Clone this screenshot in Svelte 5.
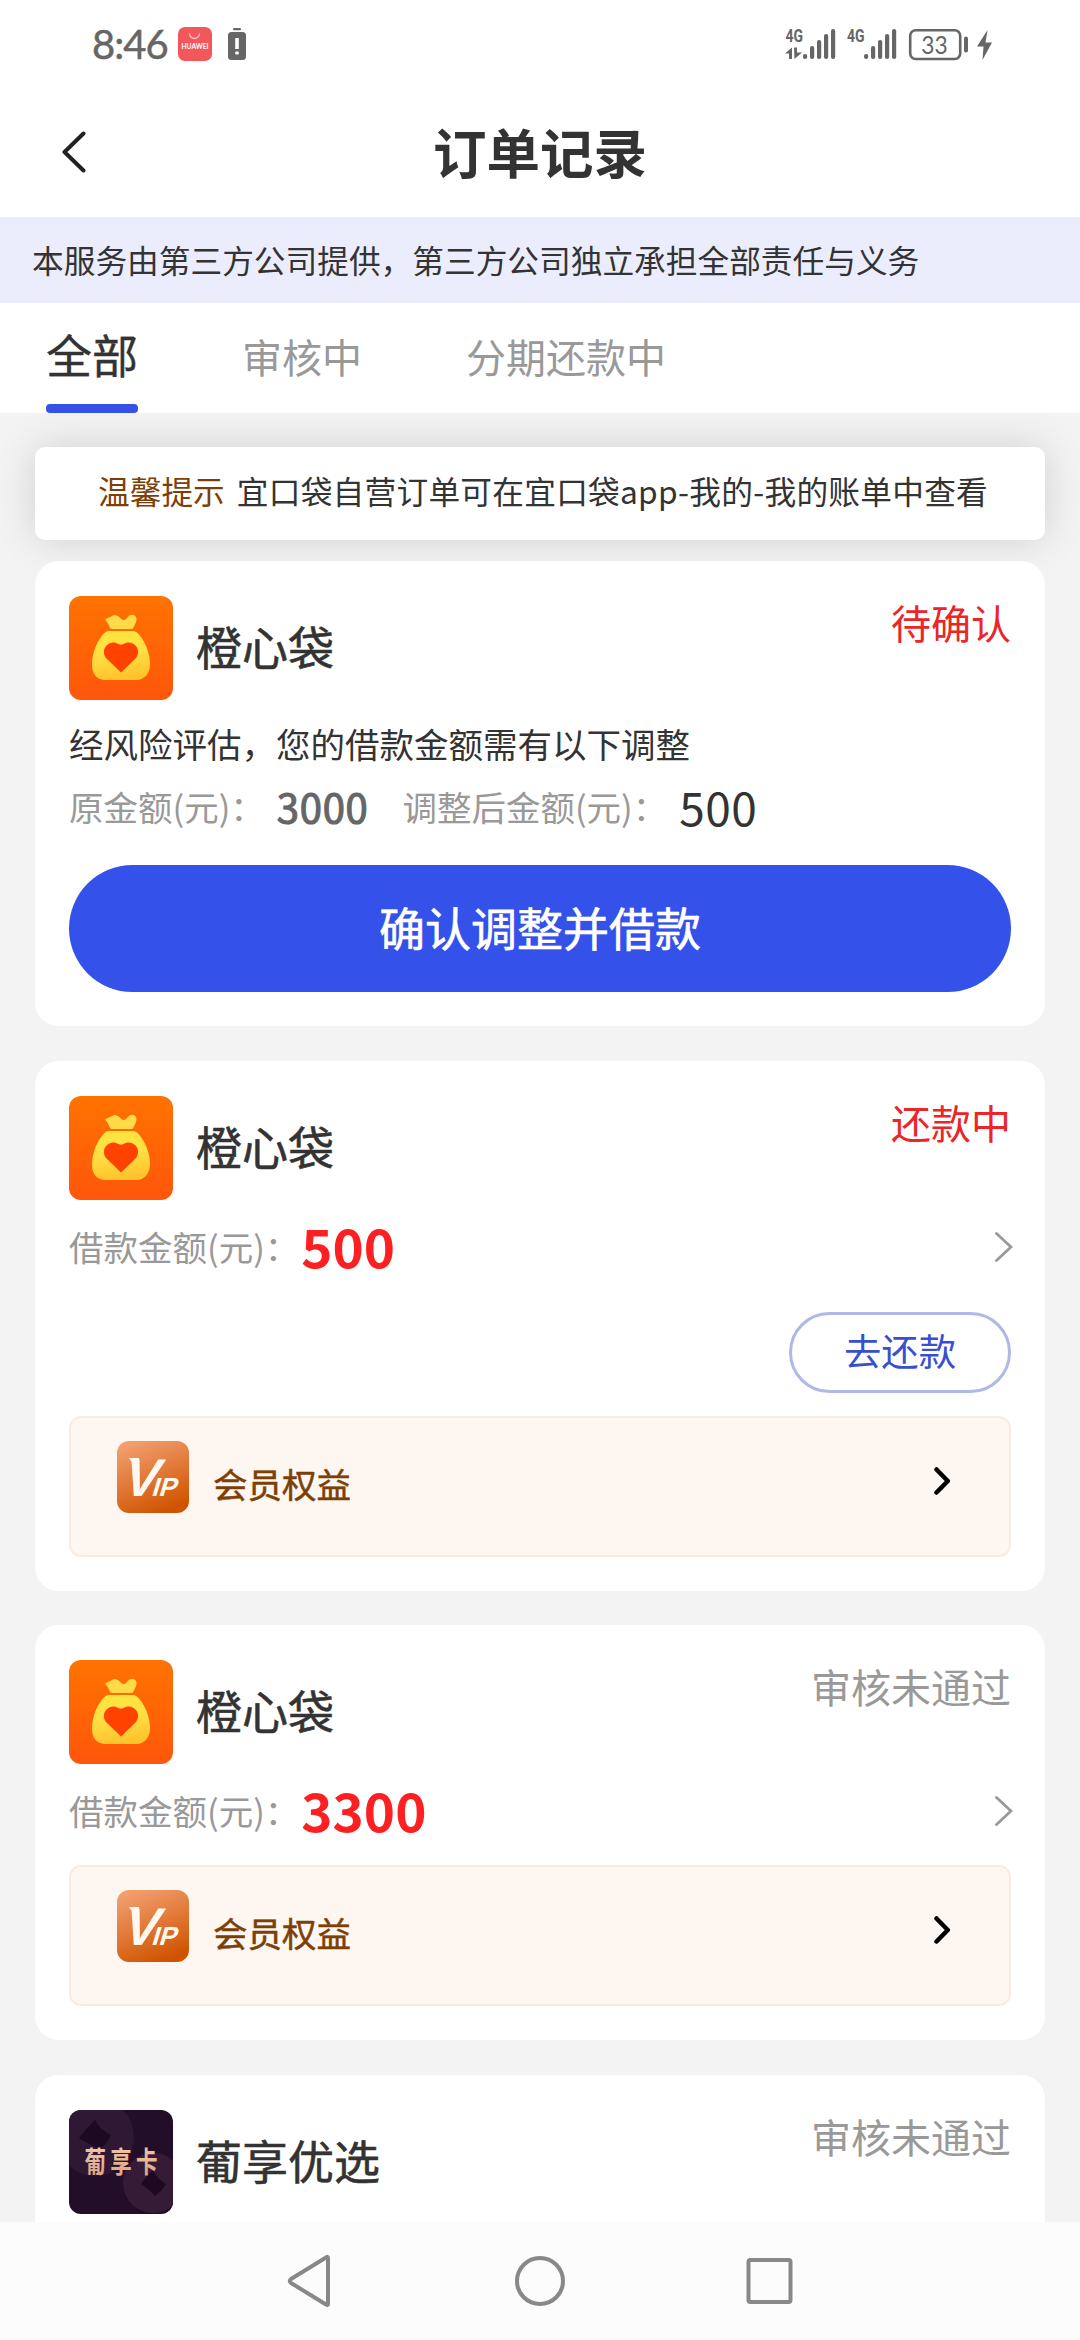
<script lang="ts">
  const tabs = ['全部', '审核中', '分期还款中'];
  const bars = [5, 13, 19, 25, 30];
  const orders = [
    { name: '橙心袋', logo: 'bag', status: '待确认', tone: 'red', kind: 'adjust', amount: '', repay: false },
    { name: '橙心袋', logo: 'bag', status: '还款中', tone: 'red', kind: 'loan', amount: '500', repay: true },
    { name: '橙心袋', logo: 'bag', status: '审核未通过', tone: 'grey', kind: 'loan', amount: '3300', repay: false },
    { name: '葡享优选', logo: 'grape', status: '审核未通过', tone: 'grey', kind: 'preview', amount: '', repay: false }
  ];
</script>

{#snippet bagLogo()}
  <svg class="logo" viewBox="0 0 104 104">
    <defs>
      <linearGradient id="bagBg" x1="0" y1="0" x2="0" y2="1">
        <stop offset="0" stop-color="#ff7300" /><stop offset="1" stop-color="#ff560c" />
      </linearGradient>
      <linearGradient id="bagFill" x1="0" y1="0" x2="0.15" y2="1">
        <stop offset="0" stop-color="#ffe53c" /><stop offset="0.5" stop-color="#ffe045" /><stop offset="1" stop-color="#ffc42c" />
      </linearGradient>
    </defs>
    <rect width="104" height="104" rx="12" fill="url(#bagBg)" />
    <path d="M36 24 C38 21 41 22 43 20 C47 17 50 21 53 23.500 C56 25 57 23 59 21 C62 17 68 19 67.500 24 C67 27 65.500 29 64.500 31.500 Q64 33 62 33 H43 Q41 33 40.500 31 Q39 26 36 24Z" fill="#ffdb48" />
    <path d="M40 35 H64 C67.500 35 69.500 38 72 41 C77 48 81 58 81 68 C81 77 76 84 67 84 H37 C28 84 23 78 23 69 C23 58 27 48 32 41 C34.500 38 36.500 35 40 35Z" fill="url(#bagFill)" />
    <path d="M52 76.500 L38 63 C34 59 34 53 37.500 49.500 C41 46 46 45.500 49.500 48 Q52 49.500 54.500 48 C58 45.500 63 46 66.500 49.500 C70 53 70 59 66 63Z" fill="#ff4200" />
  </svg>
{/snippet}

{#snippet grapeLogo()}
  <svg class="logo" viewBox="0 0 104 104">
    <defs>
      <clipPath id="grapeClip"><rect width="104" height="104" rx="12" /></clipPath>
      <linearGradient id="grapeGold" x1="0" y1="0" x2="0" y2="1">
        <stop offset="0" stop-color="#f3cdb4" /><stop offset="1" stop-color="#dda27c" />
      </linearGradient>
    </defs>
    <g clip-path="url(#grapeClip)">
      <rect width="104" height="104" fill="#220e29" />
      <circle cx="26" cy="27" r="39" fill="#2e1833" />
      <circle cx="84" cy="73" r="30" fill="#361b37" />
      <path d="M26 10 Q31 20 42 25 Q38 34 30 40 Q22 35 10 28 Q16 20 26 10Z" fill="#1d0921" />
      <path d="M84 60 Q88 69 97 74 Q94 80 86 86 Q80 79 72 74 Q76 68 84 60Z" fill="#1d0921" />
      <text transform="translate(15.500 62.500) scale(1 1.350)" font-size="21.500" letter-spacing="4.300" font-weight="700" fill="url(#grapeGold)">葡享卡</text>
    </g>
  </svg>
{/snippet}

{#snippet vipIcon()}
  <svg class="vip-icon" viewBox="0 0 72 72">
    <defs>
      <linearGradient id="vipBg" x1="0.2" y1="0" x2="0.6" y2="1">
        <stop offset="0" stop-color="#f2a070" /><stop offset="0.55" stop-color="#e07634" /><stop offset="1" stop-color="#d05400" />
      </linearGradient>
    </defs>
    <rect width="72" height="72" rx="12" fill="url(#vipBg)" />
    <path d="M12 17 H22 V20 H14 Z" fill="#fff8ee" />
    <text class="vip-v" transform="translate(3 54.500) skewX(-17)">V<tspan class="vip-ip" dx="-4.500">IP</tspan></text>
  </svg>
{/snippet}

<div class="screen">
  <div class="status-bar">
    <div class="status-left">
      <span class="time">8:46</span>
      <svg class="huawei" viewBox="0 0 34 34">
        <rect width="34" height="34" rx="7" fill="#f2575b" />
        <path d="M11.500 6.500 A5 5 0 0 0 21.500 6.500" fill="none" stroke="#fbc0c0" stroke-width="1.300" />
        <text x="3.500" y="22.300" font-size="6.600" font-weight="700" textLength="27" fill="#fff">HUAWEI</text>
      </svg>
      <svg class="alert-battery" viewBox="0 0 18 32">
        <rect x="5" width="8" height="2.200" rx="1" fill="#666" />
        <rect y="4" width="18" height="28" rx="3.500" fill="#666" />
        <rect x="7.200" y="10" width="3.600" height="11" rx="0.500" fill="#fff" />
        <rect x="7.200" y="23.500" width="3.600" height="3" rx="1" fill="#fff" />
      </svg>
    </div>
    <svg class="status-right" viewBox="0 -8 208 48">
      <g fill="#666">
        <text class="net" x="0.500" y="14" textLength="17.500" lengthAdjust="spacingAndGlyphs">4G</text>
        <path d="M0 25.500 L7 19.500 V31 H4 V25.500Z M9 19.500 H12 V24.500 H17 L9.500 31Z" />
        {#each bars as h, i}
          <rect x={18 + i * 7} y={31 - h} width="4.200" height={h} rx="2" />
          <rect x={79 + i * 7} y={31 - h} width="4.200" height={h} rx="2" />
        {/each}
        <text class="net" x="62" y="14" textLength="17.500" lengthAdjust="spacingAndGlyphs">4G</text>
        <rect x="125.200" y="2.200" width="50" height="28.800" rx="5.500" fill="none" stroke="#666" stroke-width="2.600" />
        <text class="pct" x="136.300" y="26" textLength="26.500" lengthAdjust="spacingAndGlyphs">33</text>
        <rect x="179" y="8.500" width="4" height="16" rx="2" />
        <path d="M202.500 2 L192 18.500 H198.500 L197.500 32 L207 14.500 H200.500Z" />
      </g>
    </svg>
  </div>

  <header class="header">
    <svg class="back" viewBox="0 0 24 42"><path d="M21.500 2.500 L2.500 21 L21.500 39.500" /></svg>
    <h1>订单记录</h1>
    <span class="back"></span>
  </header>

  <div class="banner">本服务由第三方公司提供，第三方公司独立承担全部责任与义务</div>

  <nav class="tabs">
    {#each tabs as tab, i}
      <div class="tab" class:active={i === 0}><span>{tab}</span></div>
    {/each}
  </nav>

  <main class="list">
    <div class="tip"><b>温馨提示</b><span>宜口袋自营订单可在宜口袋app-我的-我的账单中查看</span></div>

    {#each orders as order}
      <section class="card">
        <div class="card-head">
          {#if order.logo === 'bag'}{@render bagLogo()}{:else}{@render grapeLogo()}{/if}
          <h2>{order.name}</h2>
          <span class="status {order.tone}">{order.status}</span>
        </div>

        {#if order.kind === 'adjust'}
          <p class="notice">经风险评估，您的借款金额需有以下调整</p>
          <div class="adjust">
            <span class="label">原金额(元)：</span>
            <span class="old">3000</span>
            <span class="label">调整后金额(元)：</span>
            <span class="new">500</span>
          </div>
          <button class="confirm">确认调整并借款</button>
        {:else if order.kind === 'loan'}
          <div class="loan">
            <span class="label">借款金额(元)：</span>
            <span class="amount">{order.amount}</span>
            <svg class="go" viewBox="0 0 18 30"><path d="M1.500 1.500 L16 15 L1.500 28.500" /></svg>
          </div>
          {#if order.repay}
            <div class="actions"><button class="repay">去还款</button></div>
          {/if}
          <div class="vip" class:tight={!order.repay}>
            {@render vipIcon()}
            <span class="vip-label">会员权益</span>
            <svg class="vip-go" viewBox="0 0 17 28"><path d="M2.500 2.500 L13.800 14 L2.500 25.500" /></svg>
          </div>
        {/if}
      </section>
    {/each}
  </main>

  <footer class="sysnav">
    <svg viewBox="0 0 54 54"><path d="M44 4 V50 Q44 52 42 50.500 L7 29 Q4.500 27 7 25 L42 3.500 Q44 2 44 4Z" /></svg>
    <svg viewBox="0 0 54 54"><circle cx="27" cy="27" r="23" /></svg>
    <svg viewBox="0 0 54 54"><rect x="6.500" y="6" width="42" height="42" rx="2" /></svg>
  </footer>
</div>

<style>
  :global(body) {
    margin: 0;
    background: #f3f3f3;
  }
  .screen {
    display: flex;
    flex-direction: column;
    width: 1080px;
    height: 2340px;
    overflow: hidden;
    background: #f3f3f3;
    color: #333;
    font-family: 'Noto Sans CJK SC', 'Noto Sans', sans-serif;
  }
  .screen * {
    box-sizing: border-box;
  }
  svg {
    display: block;
    flex: none;
  }
  h1, h2, p {
    margin: 0;
  }
  button {
    font-family: inherit;
    padding: 0;
  }

  .status-bar {
    display: flex;
    justify-content: space-between;
    align-items: center;
    flex: none;
    height: 87px;
    padding: 0 88px 0 92px;
    background: #fff;
  }
  .status-left {
    display: flex;
    align-items: center;
  }
  .time {
    width: 86px;
    font: 400 40px/48px Lato, sans-serif;
    letter-spacing: -1px;
    color: #666;
    -webkit-text-stroke: 0.5px #666;
  }
  .huawei {
    width: 34px;
    height: 34px;
    margin-right: 16px;
    font-family: Lato, sans-serif;
  }
  .alert-battery {
    width: 18px;
    height: 32px;
  }
  .status-right {
    width: 208px;
    height: 48px;
    margin-right: -1px;
  }
  .net {
    font: 700 19px Roboto, sans-serif;
  }
  .pct {
    font: 400 25px Lato, sans-serif;
  }

  .header {
    display: flex;
    align-items: center;
    justify-content: space-between;
    flex: none;
    height: 130px;
    padding: 0 62px;
    background: #fff;
  }
  .back {
    width: 24px;
    height: 42px;
  }
  .back path {
    fill: none;
    stroke: #222;
    stroke-width: 4;
    stroke-linecap: round;
    stroke-linejoin: round;
  }
  h1 {
    padding-bottom: 3px;
    font-size: 53.500px;
    line-height: 64px;
    font-weight: 700;
  }

  .banner {
    flex: none;
    height: 86px;
    padding-left: 32px;
    background: #ebedfc;
    font-size: 31.700px;
    line-height: 84px;
    white-space: nowrap;
  }

  .tabs {
    display: flex;
    gap: 104px;
    flex: none;
    height: 110px;
    padding-left: 46px;
    background: #fff;
  }
  .tab {
    display: flex;
    flex-direction: column;
    justify-content: space-between;
    font-size: 40px;
    line-height: 106px;
    color: #999;
  }
  .tab.active {
    font-size: 46px;
    line-height: 101px;
    color: #333;
    -webkit-text-stroke: 0.4px #333;
  }
  .tab span {
    height: 101px;
  }
  .tab.active::after {
    content: '';
    height: 9px;
    border-radius: 4px;
    background: #3451e8;
  }

  .list {
    display: flex;
    flex-direction: column;
    flex: 1;
    min-height: 0;
    overflow: hidden;
    padding: 34px 35px 0;
  }
  .tip {
    display: flex;
    gap: 12px;
    flex: none;
    height: 93px;
    margin-bottom: 21px;
    padding-left: 63px;
    border-radius: 10px;
    background: #fff;
    box-shadow: 0 0 42px rgba(0, 0, 0, 0.14);
    font-size: 31.700px;
    line-height: 87px;
    white-space: nowrap;
  }
  .tip span {
    letter-spacing: 0.250px;
  }
  .tip b {
    font-weight: 400;
    color: #7c3f08;
  }

  .card {
    position: relative;
    flex: none;
    margin-bottom: 34.500px;
    padding: 35px 34px 34px;
    border-radius: 24px;
    background: #fff;
  }
  .card-head {
    display: flex;
    height: 104px;
  }
  .logo {
    width: 104px;
    height: 104px;
    font-family: 'Noto Sans CJK SC', sans-serif;
  }
  h2 {
    flex: 1;
    margin-left: 23px;
    font-size: 46px;
    line-height: 99px;
    font-weight: 400;
    -webkit-text-stroke: 0.6px #333;
  }
  .status {
    font-size: 40px;
    line-height: 52px;
  }
  .status.red {
    color: #ec2528;
  }
  .status.grey {
    color: #999;
  }
  .label {
    font-size: 34.500px;
    color: #999;
  }
  .notice {
    margin-top: 18px;
    font-size: 34.500px;
    line-height: 50px;
  }
  .adjust {
    display: flex;
    align-items: center;
    height: 64px;
    margin-top: 6px;
    line-height: 64px;
    white-space: nowrap;
  }
  .old {
    margin: 0 34px 0 12px;
    font-size: 40px;
    letter-spacing: 0.700px;
    color: #666;
    -webkit-text-stroke: 1.1px #666;
  }
  .new {
    margin-left: 12px;
    font-size: 46px;
    letter-spacing: 0.500px;
  }
  .confirm {
    display: block;
    width: 100%;
    height: 127px;
    margin-top: 27px;
    border: 0;
    border-radius: 64px;
    background: #3451e9;
    color: #fff;
    font-size: 46px;
    line-height: 121px;
    padding-bottom: 5px;
    -webkit-text-stroke: 0.6px #fff;
  }

  .loan {
    display: flex;
    align-items: center;
    height: 64px;
    margin-top: 15px;
  }
  .loan .label {
    line-height: 62px;
    padding-bottom: 2px;
  }
  .amount {
    flex: 1;
    margin-left: 2px;
    padding-bottom: 4px;
    font-size: 53px;
    line-height: 60px;
    font-weight: 700;
    color: #fd2023;
  }
  .go {
    width: 18px;
    height: 30px;
    margin-right: -2px;
  }
  .go path {
    fill: none;
    stroke: #999;
    stroke-width: 2.800;
    stroke-linecap: round;
  }
  .actions {
    display: flex;
    justify-content: flex-end;
    margin-top: 33px;
  }
  .repay {
    width: 222px;
    height: 81px;
    padding-bottom: 4px;
    border: 3px solid #b0b9e6;
    border-radius: 41px;
    background: #fff;
    color: #3850d0;
    font-size: 37.400px;
    line-height: 70px;
  }
  .vip {
    display: flex;
    height: 141px;
    margin-top: 23px;
    padding: 23px 58px 0 46px;
    border: 2px solid #f8ece1;
    border-radius: 12px;
    background: #fef7f1;
  }
  .vip.tight {
    margin-top: 22px;
  }
  .vip-icon {
    width: 72px;
    height: 72px;
  }
  .vip-v {
    font: 700 53px 'Liberation Sans', sans-serif;
    fill: #fff8ee;
  }
  .vip-ip {
    font-size: 26px;
  }
  .vip-label {
    flex: 1;
    margin-left: 24px;
    font-size: 34.500px;
    line-height: 84px;
    color: #7c3f08;
    -webkit-text-stroke: 0.5px #7c3f08;
  }
  .vip-go {
    width: 17px;
    height: 28px;
    margin-top: 26px;
  }
  .vip-go path {
    fill: none;
    stroke: #000;
    stroke-width: 4.500;
    stroke-linecap: round;
    stroke-linejoin: round;
  }

  .sysnav {
    display: flex;
    justify-content: center;
    align-items: center;
    gap: 175px;
    flex: none;
    height: 118px;
    background: #fcfcfc;
  }
  .sysnav svg {
    width: 54px;
    height: 54px;
    fill: none;
    stroke: #888;
    stroke-width: 4;
    stroke-linejoin: round;
  }
</style>
